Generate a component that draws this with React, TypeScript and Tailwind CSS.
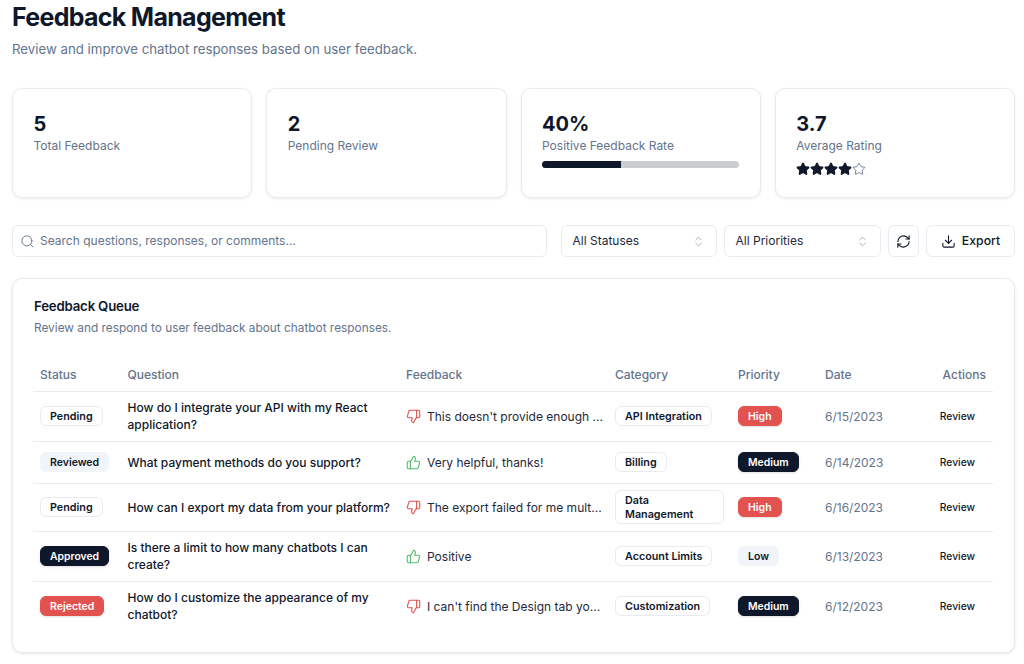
import { ChevronsUpDown, Download, RefreshCw, Search, Star, ThumbsDown, ThumbsUp } from 'lucide-react';

type Tone = 'outline' | 'muted' | 'dark' | 'red';

interface Row {
  id: number;
  status: string;
  statusTone: Tone;
  question: string;
  positive: boolean;
  feedback: string;
  category: string;
  priority: string;
  priorityTone: Tone;
  date: string;
  height: string;
}

const rows: Row[] = [
  { id: 1, status: 'Pending', statusTone: 'outline', question: 'How do I integrate your API with my React application?', positive: false, feedback: "This doesn't provide enough ...", category: 'API Integration', priority: 'High', priorityTone: 'red', date: '6/15/2023', height: 'h-[50px]' },
  { id: 2, status: 'Reviewed', statusTone: 'muted', question: 'What payment methods do you support?', positive: true, feedback: 'Very helpful, thanks!', category: 'Billing', priority: 'Medium', priorityTone: 'dark', date: '6/14/2023', height: 'h-[42px]' },
  { id: 3, status: 'Pending', statusTone: 'outline', question: 'How can I export my data from your platform?', positive: false, feedback: 'The export failed for me mult...', category: 'Data Management', priority: 'High', priorityTone: 'red', date: '6/16/2023', height: 'h-[48px]' },
  { id: 4, status: 'Approved', statusTone: 'dark', question: 'Is there a limit to how many chatbots I can create?', positive: true, feedback: 'Positive', category: 'Account Limits', priority: 'Low', priorityTone: 'muted', date: '6/13/2023', height: 'h-[50px]' },
  { id: 5, status: 'Rejected', statusTone: 'red', question: 'How do I customize the appearance of my chatbot?', positive: false, feedback: "I can't find the Design tab yo...", category: 'Customization', priority: 'Medium', priorityTone: 'dark', date: '6/12/2023', height: 'h-[50px]' },
];

const toneClass: Record<Tone, string> = {
  outline: 'bg-white border-[#e8ebf1] text-[#0f172a] text-[10.75px]',
  muted: 'bg-[#f1f5f9] border-[#f1f5f9] text-[#0f172a] text-[10.5px]',
  dark: 'bg-[#0f172a] border-[#0f172a] text-white shadow-sm text-[10.4px]',
  red: 'bg-[#e2524f] border-[#e2524f] text-white shadow-sm text-[10.5px]',
};

function Badge({ tone, children }: { tone: Tone; children: string }) {
  return (
    <span className={`flex w-fit items-center rounded-[6px] border px-[9px] pt-[3px] pb-[1px] leading-[14px] font-semibold ${toneClass[tone]}`}>
      {children}
    </span>
  );
}

function StatCard({ value, label, children }: { value: string; label: string; children?: React.ReactNode }) {
  return (
    <div className="h-[110px] flex-1 rounded-[10px] border border-[#e8ebf1] bg-white px-[20.5px] pt-[21px] shadow-[0_1px_3px_rgba(15,23,42,0.08)]">
      <p className="text-[20px] leading-[28px] font-bold text-[#0f172a]">{value}</p>
      <p className="text-[12px] leading-[16px] text-[#64748b]">{label}</p>
      {children}
    </div>
  );
}

function SelectBox({ label, width }: { label: string; width: string }) {
  return (
    <div className={`flex h-[32px] items-center justify-between rounded-[6px] border border-[#e8ebf1] bg-white pr-[11px] pl-[10.5px] text-[12px] text-[#1e293b] ${width}`}>
      {label}
      <ChevronsUpDown className="h-[13px] w-[13px] text-[#94a3b8]" strokeWidth={1.5} />
    </div>
  );
}

const headCell = 'px-[7px] pt-[4px] text-left font-medium';

export default function App() {
  return (
    <div className="h-[664px] w-[1024px] overflow-hidden bg-white pr-[9px] pl-[12px] font-['Inter',sans-serif]">
      <h1 className="pt-px text-[25px] leading-[32px] font-bold tracking-[-0.7px] text-[#0f172a]">Feedback Management</h1>
      <p className="mt-[6px] text-[13.25px] leading-[20px] text-[#64748b]">Review and improve chatbot responses based on user feedback.</p>

      <div className="mt-[29px] flex gap-[14px]">
        <StatCard value="5" label="Total Feedback" />
        <StatCard value="2" label="Pending Review" />
        <StatCard value="40%" label="Positive Feedback Rate">
          <div className="mt-[7px] h-[7px] w-[197px] overflow-hidden rounded-full bg-[#cbcdd1]">
            <div className="h-full w-[40%] bg-[#0f172a]" />
          </div>
        </StatCard>
        <StatCard value="3.7" label="Average Rating">
          <div className="mt-[8px] flex">
            {[1, 2, 3, 4, 5].map(n => (
              <Star
                key={n}
                className={`h-[14px] w-[14px] ${n <= 4 ? 'fill-[#0f172a] text-[#0f172a]' : 'text-[#475569]'}`}
                strokeWidth={n <= 4 ? 2 : 1.25}
              />
            ))}
          </div>
        </StatCard>
      </div>

      <div className="mt-[27px] flex items-center">
        <div className="flex h-[32px] w-[535px] items-center gap-[5px] rounded-[6px] border border-[#e8ebf1] bg-white pl-[7px] text-[12px] text-[#64748b]">
          <Search className="h-[15px] w-[15px] text-[#64748b]" strokeWidth={1.5} />
          Search questions, responses, or comments...
        </div>
        <div className="ml-[14px] flex items-center gap-[7px]">
          <SelectBox label="All Statuses" width="w-[156px]" />
          <SelectBox label="All Priorities" width="w-[157px]" />
          <button className="flex h-[32px] w-[31px] items-center justify-center rounded-[6px] border border-[#e8ebf1] bg-white text-[#0f172a]">
            <RefreshCw className="h-[15px] w-[15px]" strokeWidth={1.75} />
          </button>
          <button className="flex h-[32px] w-[89px] items-center justify-center gap-[6px] rounded-[6px] border border-[#e8ebf1] bg-white text-[12.25px] font-medium text-[#0f172a]">
            <Download className="h-[15px] w-[15px]" strokeWidth={1.75} />
            Export
          </button>
        </div>
      </div>

      <div className="mt-[21px] h-[375px] rounded-[10px] border border-[#e8ebf1] bg-white px-[20px] pt-[19px] shadow-[0_1px_3px_rgba(15,23,42,0.1)]">
        <h2 className="pl-px text-[13.25px] leading-[16px] font-semibold tracking-[-0.2px] text-[#0f172a]">Feedback Queue</h2>
        <p className="mt-[6px] pl-px text-[11.85px] leading-[16px] text-[#64748b]">Review and respond to user feedback about chatbot responses.</p>

        <table className="mt-[19px] w-[960px] table-fixed border-collapse text-[12px] leading-[17px]">
          <colgroup>
            <col className="w-[87.5px]" />
            <col className="w-[278.5px]" />
            <col className="w-[209px]" />
            <col className="w-[123px]" />
            <col className="w-[87px]" />
            <col className="w-[87px]" />
            <col className="w-[88px]" />
          </colgroup>
          <thead>
            <tr className="h-[36px] border-b border-[#e8ebf1] text-[#64748b]">
              <th className={headCell}>Status</th>
              <th className={headCell}>Question</th>
              <th className={headCell}>Feedback</th>
              <th className={headCell}>Category</th>
              <th className={headCell}>Priority</th>
              <th className={headCell}>Date</th>
              <th className="px-[7px] pt-[4px] text-right font-medium">Actions</th>
            </tr>
          </thead>
          <tbody>
            {rows.map((row, i) => (
              <tr key={row.id} className={`${row.height} ${i < rows.length - 1 ? 'border-b border-[#e8ebf1]' : ''}`}>
                <td className="px-[7px]"><Badge tone={row.statusTone}>{row.status}</Badge></td>
                <td className="px-[7px] font-medium text-[#0f172a]">{row.question}</td>
                <td className="px-[7px]">
                  <div className="flex items-center gap-[6px]">
                    {row.positive ? (
                      <ThumbsUp className="h-[15px] w-[15px] shrink-0 text-[#4fbf6b]" strokeWidth={1.75} />
                    ) : (
                      <ThumbsDown className="h-[15px] w-[15px] shrink-0 text-[#e2524f]" strokeWidth={1.75} />
                    )}
                    <span className="whitespace-nowrap text-[#1e293b]">{row.feedback}</span>
                  </div>
                </td>
                <td className="px-[7px]"><Badge tone="outline">{row.category}</Badge></td>
                <td className="px-[7px]"><Badge tone={row.priorityTone}>{row.priority}</Badge></td>
                <td className="px-[7px] text-[#64748b]">{row.date}</td>
                <td className="pr-[18px] text-right text-[10.25px] font-medium text-[#0f172a]">Review</td>
              </tr>
            ))}
          </tbody>
        </table>
      </div>
    </div>
  );
}
